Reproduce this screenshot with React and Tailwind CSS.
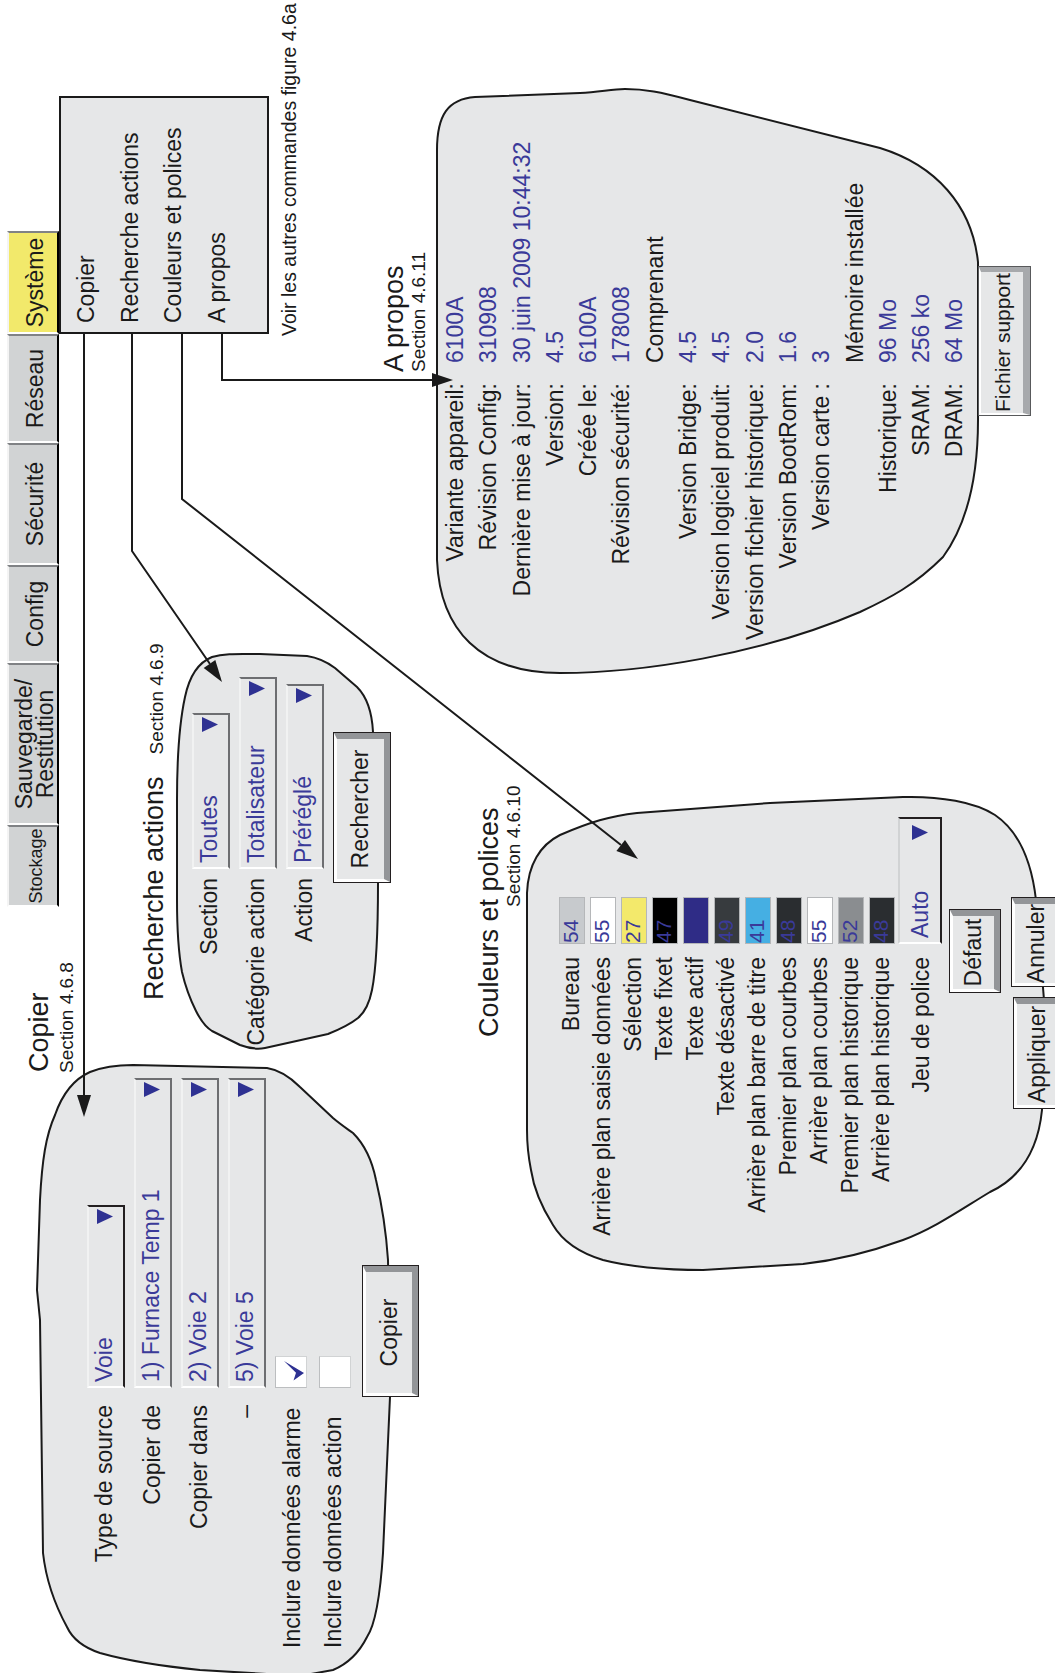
import React from 'react';

const BLUE = 'text-[#3a3a99]';

function Tri({ className = '' }) {
  return (
    <svg className={`shrink-0 ${className}`} width="15" height="16" viewBox="0 0 15 16">
      <path d="M0 0H15L7.5 16Z" fill="#2e3192" />
    </svg>
  );
}

function Dropdown({ w, text, dark = false }) {
  return (
    <div
      className={`${w} h-[38px] flex justify-between bg-[#e6e7e8] border-2 border-t-[#f1f2f2] border-l-white ${
        dark ? 'border-r-[#231f20] border-b-[#231f20]' : 'border-r-[#6d6e71] border-b-[#6d6e71]'
      } pl-[4px] pr-[2px]`}
    >
      <span className={`${BLUE} text-[23px] leading-[30px] whitespace-nowrap`}>{text}</span>
      <Tri className="mt-[8px]" />
    </div>
  );
}

function Btn({ className, children }) {
  return (
    <div className={`border border-[#231f20] ${className}`}>
      <div className="h-full w-full flex items-center justify-center bg-[#e6e7e8] border-t-[3px] border-l-[3px] border-t-white border-l-white border-r-[6px] border-b-[6px] border-r-[#939598] border-b-[#939598] text-[23px] leading-none whitespace-nowrap">
        {children}
      </div>
    </div>
  );
}

function Checkbox({ checked = false }) {
  return (
    <div className="w-[32px] h-[32px] bg-white border border-t-[#bcbec0] border-l-[#bcbec0] border-r-[#d1d3d4] border-b-[#d1d3d4]">
      {checked && (
        <svg width="30" height="30" viewBox="0 0 30 30">
          <path d="M26 8 L14 28 L6.5 17.5 L14.2 20 Z" fill="#2e3192" />
        </svg>
      )}
    </div>
  );
}

const aboutRows = [
  ['Variante appareil:', '6100A', false],
  ['Révision Config:', '310908', false],
  ['Dernière mise à jour:', '30 juin 2009 10:44:32', false],
  ['Version:', '4.5', false],
  ['Créée le:', '6100A', false],
  ['Révision sécurité:', '178008', false],
  ['', 'Comprenant', true],
  ['Version Bridge:', '4.5', false],
  ['Version logiciel produit:', '4.5', false],
  ['Version fichier historique:', '2.0', false],
  ['Version BootRom:', '1.6', false],
  ['Version carte :', '3', false],
  ['', 'Mémoire installée', true],
  ['Historique:', '96 Mo', false],
  ['SRAM:', '256 ko', false],
  ['DRAM:', '64 Mo', false],
];

const swatches = [
  ['Bureau', 'bg-[#c7cacd]', '54'],
  ['Arrière plan saisie données', 'bg-white', '55'],
  ['Sélection', 'bg-[#f3e96b]', '27'],
  ['Texte fixet', 'bg-black', '47'],
  ['Texte actif', 'bg-[#2f2c86]', ''],
  ['Texte désactivé', 'bg-[#373b3e]', '49'],
  ['Arrière plan barre de titre', 'bg-[#45afe3]', '41'],
  ['Premier plan courbes', 'bg-[#2a2d30]', '48'],
  ['Arrière plan courbes', 'bg-white', '55'],
  ['Premier plan historique', 'bg-[#8a8d90]', '52'],
  ['Arrière plan historique', 'bg-[#2a2d30]', '48'],
];

function Tab({ w, children, active = false, extra = 'pt-[5px]' }) {
  return (
    <div
      className={`${w} h-[52px] flex items-center justify-center ${extra} border-t-2 border-l-2 border-r-2 border-b-2 border-t-[#f4f4f4] border-l-white border-r-[#808285] border-b-black ${
        active ? 'bg-[#f2e96b]' : 'bg-[#d1d3d4]'
      }`}
    >
      {children}
    </div>
  );
}

export default function App() {
  return (
    <div className="relative w-[1055px] h-[1673px] overflow-hidden bg-white font-['Liberation_Sans',Arial,sans-serif] text-[#1a1a1a]">
      {/* Drawing layer: callout bubbles and connectors (screen coordinates) */}
      <svg className="absolute left-0 top-0" width="1055" height="1673" viewBox="0 0 1055 1673">
        <g fill="#e6e7e8" stroke="#1a1a1a" strokeWidth="2" strokeLinejoin="round">
          <path d="M437 560 L437 150 C437 115 448 99 475 97 L580 93 C600 92 612 89 625 89 C645 89 660 92 690 100 L880 148 C935 165 972 205 978 262 L978 420 C978 470 970 520 943 557 C915 585 890 598 860 612 C760 655 640 673 560 673 C480 673 440 630 437 560 Z" />
          <path d="M177 800 C177 760 180 720 185 697 C189 678 197 663 212 657 C225 653 240 654 260 654 L307 656 C320 658 327 662 335 668 L357 687 C367 697 372 712 373 732 L378 883 C378 930 377 965 372 990 C369 1005 364 1013 358 1018 C348 1026 338 1030 328 1034 L265 1048 C255 1050 248 1048 240 1045 L212 1031 C204 1026 200 1019 196 1011 C189 997 185 985 182 972 C178 950 177 925 177 900 Z" />
          <path d="M527 1130 L527 893 C528 865 540 845 560 835 C590 822 610 816 637 813 L770 803 L903 797 C940 796 975 802 995 815 C1020 832 1032 865 1036 900 L1044 1000 L1042 1110 C1038 1150 1020 1178 990 1192 C960 1210 935 1228 903 1240 C870 1252 840 1260 803 1264 L703 1270 C660 1270 630 1267 603 1260 C580 1253 563 1242 553 1225 C541 1206 534 1190 531 1170 C528 1155 527 1142 527 1130 Z" />
          <path d="M37 1290 L40 1200 C42 1160 46 1135 55 1115 C62 1095 72 1080 90 1072 C105 1066 120 1065 133 1065 L267 1068 C280 1070 290 1077 300 1087 L333 1118 C340 1124 346 1128 353 1133 C365 1145 372 1160 376 1180 C382 1205 386 1230 388 1260 L390 1397 L383 1553 C380 1600 375 1625 367 1637 C358 1655 345 1665 333 1670 L300 1676 L200 1670 C160 1666 125 1660 100 1653 C85 1648 73 1640 67 1627 C55 1605 46 1580 43 1553 L40 1320 Z" />
        </g>
        <g fill="none" stroke="#1a1a1a" strokeWidth="2">
          <polyline points="84,333 84,1097" />
          <polyline points="132,333 132,551 210,664" />
          <polyline points="182,333 182,499 621,845" />
          <polyline points="222,333 222,380 433,380" />
        </g>
        <g fill="#1a1a1a">
          <polygon points="84,1117 77,1095 91,1095" />
          <polygon points="222,682 203.7,667.9 215.3,659.9" />
          <polygon points="638,859 616.4,850.9 625,839.9" />
          <polygon points="453,380 432,373 432,387" />
        </g>
      </svg>

      {/* Rotated diagram canvas (landscape coordinates) */}
      <div className="absolute left-0 top-0 w-[1673px] h-[1055px] origin-top-left [transform:translateY(1673px)_rotate(-90deg)]">
        {/* Tabs */}
        <div className="absolute left-[766px] top-[7px] flex">
          <Tab w="w-[82px]">
            <span className="text-[18px] leading-none">Stockage</span>
          </Tab>
          <Tab w="w-[162px]" extra="pt-[3px]">
            <span className="text-[23px] leading-[21px] text-center">
              Sauvegarde/
              <br />
              Restitution
            </span>
          </Tab>
          <Tab w="w-[98px]">
            <span className="text-[23px] leading-none">Config</span>
          </Tab>
          <Tab w="w-[122px]">
            <span className="text-[23px] leading-none">Sécurité</span>
          </Tab>
          <Tab w="w-[109px]">
            <span className="text-[23px] leading-none">Réseau</span>
          </Tab>
          <Tab w="w-[103px]" active>
            <span className="text-[23px] leading-none">Système</span>
          </Tab>
        </div>

        {/* System menu */}
        <div className="absolute left-[1339px] top-[59px] w-[238px] h-[210px] border-2 border-[#1a1a1a] bg-[#e6e7e8] pl-[9px] pt-[4px] flex flex-col text-[23px] leading-[43.7px] whitespace-nowrap">
          <span>Copier</span>
          <span>Recherche actions</span>
          <span>Couleurs et polices</span>
          <span>A propos</span>
        </div>
        <div className="absolute left-[1337px] top-[280px] text-[19.5px] leading-none whitespace-nowrap">
          Voir les autres commandes figure 4.6a
        </div>

        {/* A propos */}
        <div className="absolute left-[1301px] top-[381px] flex flex-col whitespace-nowrap">
          <span className="text-[27px] leading-none">A propos</span>
          <span className="text-[19px] leading-none mt-[1px]">Section 4.6.11</span>
        </div>
        <div className="absolute left-[990px] top-[439px] grid grid-cols-[300px_auto] gap-x-[20px] text-[23px] leading-[33.3px] whitespace-nowrap">
          {aboutRows.map(([label, value, plain], i) => (
            <React.Fragment key={i}>
              <span className="text-right">{label}</span>
              <span className={plain ? '' : BLUE}>{value}</span>
            </React.Fragment>
          ))}
        </div>
        <div className="absolute left-[1257px] top-[978px] w-[150px] h-[53px] border border-[#58595b]">
          <div className="h-full w-full flex items-center justify-center bg-[#e6e7e8] border-t-2 border-l-2 border-t-white border-l-white border-r-[5px] border-b-[7px] border-r-[#a7a9ac] border-b-[#a7a9ac] text-[21px] leading-none whitespace-nowrap">
            Fichier support
          </div>
        </div>

        {/* Recherche actions */}
        <div className="absolute left-[673px] top-[141px] flex items-baseline gap-x-[22px] whitespace-nowrap">
          <span className="text-[27px] leading-none">Recherche actions</span>
          <span className="text-[19px] leading-none">Section 4.6.9</span>
        </div>
        <div className="absolute left-[600px] top-[192px] flex flex-col gap-y-[9px] text-[23px] whitespace-nowrap">
          <div className="flex">
            <span className="w-[195px] text-right leading-[34px]">Section</span>
            <div className="ml-[9px]">
              <Dropdown w="w-[156px]" text="Toutes" />
            </div>
          </div>
          <div className="flex">
            <span className="w-[195px] text-right leading-[34px]">Catégorie action</span>
            <div className="ml-[9px]">
              <Dropdown w="w-[192px]" text="Totalisateur" />
            </div>
          </div>
          <div className="flex">
            <span className="w-[195px] text-right leading-[36px]">Action</span>
            <div className="ml-[9px]">
              <Dropdown w="w-[185px]" text="Préréglé" />
            </div>
          </div>
          <Btn className="ml-[190px] w-[151px] h-[58px]">Rechercher</Btn>
        </div>

        {/* Couleurs et polices */}
        <div className="absolute left-[636px] top-[476px] flex flex-col whitespace-nowrap">
          <span className="text-[27px] leading-none">Couleurs et polices</span>
          <span className="text-[19px] leading-none mt-[1px] ml-[130px]">Section 4.6.10</span>
        </div>
        <div className="absolute left-[426px] top-[559px] flex flex-col whitespace-nowrap">
          <div className="grid grid-cols-[290px_47px] gap-x-[13px] gap-y-[5px]">
            {swatches.map(([label, bg, num]) => (
              <React.Fragment key={label}>
                <span className="h-[26px] text-right text-[23px] leading-[24px]">{label}</span>
                <div className={`h-[26px] ${bg} border border-[#b5b7b9] text-[21px] leading-[22px] ${BLUE}`}>{num}</div>
              </React.Fragment>
            ))}
          </div>
          <div className="flex mt-[3px] gap-x-[13px]">
            <span className="w-[290px] text-right text-[23px] leading-[24px] pt-[11px]">Jeu de police</span>
            <div className="w-[127px] h-[44px] flex justify-between bg-[#e6e7e8] border-2 border-t-[#d1d3d4] border-l-white border-r-[#231f20] border-b-[#231f20] pl-[4px] pr-[6px]">
              <span className={`${BLUE} text-[23px] leading-[40px]`}>Auto</span>
              <Tri className="mt-[12px]" />
            </div>
          </div>
        </div>
        <Btn className="absolute left-[680px] top-[949px] w-[84px] h-[52px]">Défaut</Btn>
        <Btn className="absolute left-[686px] top-[1011px] w-[90px] h-[62px]">
          <span className="self-start mt-[10px]">Annuler</span>
        </Btn>
        <Btn className="absolute left-[564px] top-[1013px] w-[112px] h-[62px]">
          <span className="self-start mt-[9px]">Appliquer</span>
        </Btn>

        {/* Copier */}
        <div className="absolute left-[601px] top-[26px] flex flex-col whitespace-nowrap">
          <span className="text-[27px] leading-none">Copier</span>
          <span className="text-[19px] leading-none mt-[4px] -ml-[1px]">Section 4.6.8</span>
        </div>
        <div className="absolute left-0 top-[87px] flex flex-col gap-y-[9px] text-[23px] whitespace-nowrap">
          <div className="flex">
            <span className="w-[268px] text-right leading-[34px]">Type de source</span>
            <div className="ml-[17px]">
              <Dropdown w="w-[183px]" text="Voie" dark />
            </div>
          </div>
          <div className="flex">
            <span className="w-[268px] text-right leading-[36px]">Copier de</span>
            <div className="ml-[17px]">
              <Dropdown w="w-[310px]" text="1) Furnace Temp 1" />
            </div>
          </div>
          <div className="flex">
            <span className="w-[268px] text-right leading-[36px]">Copier dans</span>
            <div className="ml-[17px]">
              <Dropdown w="w-[310px]" text="2) Voie 2" />
            </div>
          </div>
          <div className="flex">
            <span className="w-[268px] text-right leading-[34px]">–</span>
            <div className="ml-[17px]">
              <Dropdown w="w-[310px]" text="5) Voie 5" />
            </div>
          </div>
        </div>
        <div className="absolute left-[25px] top-[275px] flex flex-col gap-y-[10px] text-[23px] whitespace-nowrap">
          <div className="flex">
            <span className="w-[260px] leading-[34px]">Inclure données alarme</span>
            <Checkbox checked />
          </div>
          <div className="flex">
            <span className="w-[260px] leading-[28px]">Inclure données action</span>
            <Checkbox />
          </div>
        </div>
        <Btn className="absolute left-[276px] top-[362px] w-[132px] h-[57px]">Copier</Btn>
      </div>
    </div>
  );
}
